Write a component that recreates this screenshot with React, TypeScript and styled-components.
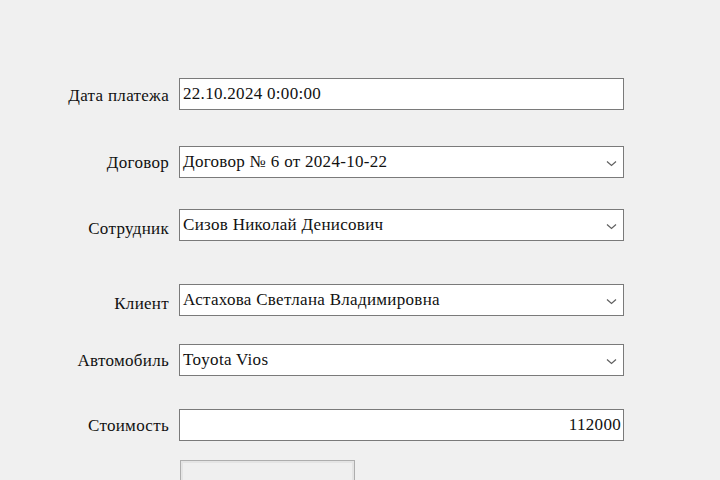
import styled, { createGlobalStyle } from "styled-components";

const Global = createGlobalStyle`
  html, body {
    margin: 0;
    padding: 0;
    background: #f0f0f0;
  }
  body {
    width: 720px;
    height: 480px;
    overflow: hidden;
    font-family: "Liberation Serif", "DejaVu Serif", serif;
    color: #111;
  }
`;

const Form = styled.div`
  display: flex;
  flex-direction: column;
  padding-top: 78px;
`;

const Row = styled.div<{ $gap: number }>`
  display: grid;
  grid-template-columns: 179px 445px;
  align-items: center;
  margin-top: ${(p) => p.$gap}px;
`;

const Label = styled.label<{ $shift: number }>`
  text-align: right;
  padding-right: 10px;
  font-size: 17px;
  letter-spacing: 0.3px;
  position: relative;
  top: ${(p) => p.$shift}px;
  white-space: nowrap;
`;

const Field = styled.div<{ $right?: boolean }>`
  height: 32px;
  box-sizing: border-box;
  border: 1px solid #7a7a7a;
  background: #ffffff;
  display: flex;
  align-items: center;
  justify-content: ${(p) => (p.$right ? "flex-end" : "space-between")};
  padding: 0 ${(p) => (p.$right ? 2 : 6)}px 0 3px;
  font-size: 17px;
  letter-spacing: 0.3px;
  white-space: nowrap;
`;

const Chevron = styled.svg`
  width: 11px;
  height: 7px;
  margin-top: 2px;
  flex: none;
`;

const ButtonRow = styled.div`
  margin-top: 19px;
  padding-left: 180px;
`;

const Button = styled.button`
  width: 175px;
  height: 30px;
  box-sizing: border-box;
  border: 1px solid #adadad;
  background: #efefef;
  box-shadow: inset 0 0 0 2px #e4e4e4;
`;

function Combo({ text }: { text: string }) {
  return (
    <Field>
      <span>{text}</span>
      <Chevron viewBox="0 0 11 7">
        <path d="M1 1.5 L5.5 5.5 L10 1.5" fill="none" stroke="#606060" strokeWidth="1.2" />
      </Chevron>
    </Field>
  );
}

function App() {
  return (
    <>
      <Global />
      <Form>
        <Row $gap={0}>
          <Label $shift={2}>Дата платежа</Label>
          <Field>22.10.2024 0:00:00</Field>
        </Row>
        <Row $gap={36}>
          <Label $shift={1}>Договор</Label>
          <Combo text="Договор № 6 от 2024-10-22" />
        </Row>
        <Row $gap={31}>
          <Label $shift={4}>Сотрудник</Label>
          <Combo text="Сизов Николай Денисович" />
        </Row>
        <Row $gap={43}>
          <Label $shift={4}>Клиент</Label>
          <Combo text="Астахова Светлана Владимировна" />
        </Row>
        <Row $gap={28}>
          <Label $shift={1}>Автомобиль</Label>
          <Combo text="Toyota Vios" />
        </Row>
        <Row $gap={33}>
          <Label $shift={1}>Стоимость</Label>
          <Field $right>112000</Field>
        </Row>
        <ButtonRow>
          <Button />
        </ButtonRow>
      </Form>
    </>
  );
}

export default App;
